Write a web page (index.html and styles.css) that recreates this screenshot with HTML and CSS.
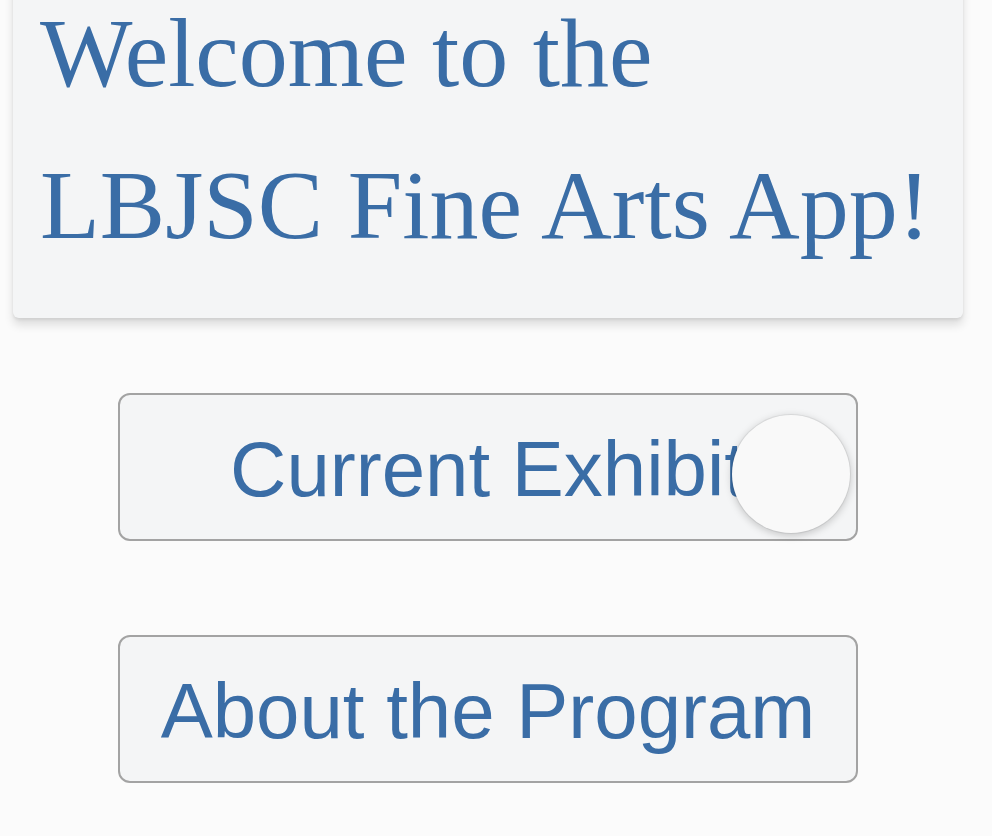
FILE: index.html
```html
<!DOCTYPE html>
<html lang="en">
<head>
<meta charset="utf-8">
<title>LBJSC Fine Arts App</title>
<link rel="stylesheet" href="styles.css">
</head>
<body>
  <header class="welcome-card">
    <h1 class="welcome-title">Welcome to the<br>LBJSC Fine Arts App!</h1>
  </header>
  <nav class="menu">
    <button class="menu-button" type="button">Current Exhibit<span class="touch-indicator"></span></button>
    <button class="menu-button" type="button">About the Program</button>
  </nav>
</body>
</html>
```

FILE: styles.css
```css
html, body {
  margin: 0;
  padding: 0;
}

body {
  background: #fbfbfb;
  width: 992px;
  height: 836px;
  overflow: hidden;
}

.welcome-card {
  margin: 0 29px 0 13px;
  padding: 0 0 37px 27px;
  background: #f4f5f6;
  border-radius: 0 0 6px 6px;
  box-shadow: 0 7px 10px rgba(0, 0, 0, 0.12), 0 2px 3px rgba(0, 0, 0, 0.07);
}

.welcome-title {
  margin: -23px 0 0 0;
  font-family: "Liberation Serif", "Times New Roman", serif;
  font-weight: normal;
  font-size: 98px;
  line-height: 152px;
  color: #3a6da6;
}

.menu {
  display: flex;
  flex-direction: column;
  align-items: center;
  gap: 94px;
  margin-top: 75px;
  padding-right: 16px;
}

.menu-button {
  position: relative;
  box-sizing: border-box;
  width: 740px;
  height: 148px;
  padding: 4px 0 0 0;
  border: 2px solid #a3a3a3;
  border-radius: 12px;
  background: #f4f5f6;
  font-family: "Liberation Sans", Arial, sans-serif;
  font-size: 78px;
  color: #3a6da6;
  text-align: center;
  cursor: pointer;
}

.touch-indicator {
  position: absolute;
  left: 612px;
  top: 20px;
  width: 118px;
  height: 118px;
  border-radius: 50%;
  background: #f9f9f9;
  box-shadow: 0 0 0 1px rgba(0, 0, 0, 0.06), 0 2px 8px rgba(0, 0, 0, 0.22);
}
```
